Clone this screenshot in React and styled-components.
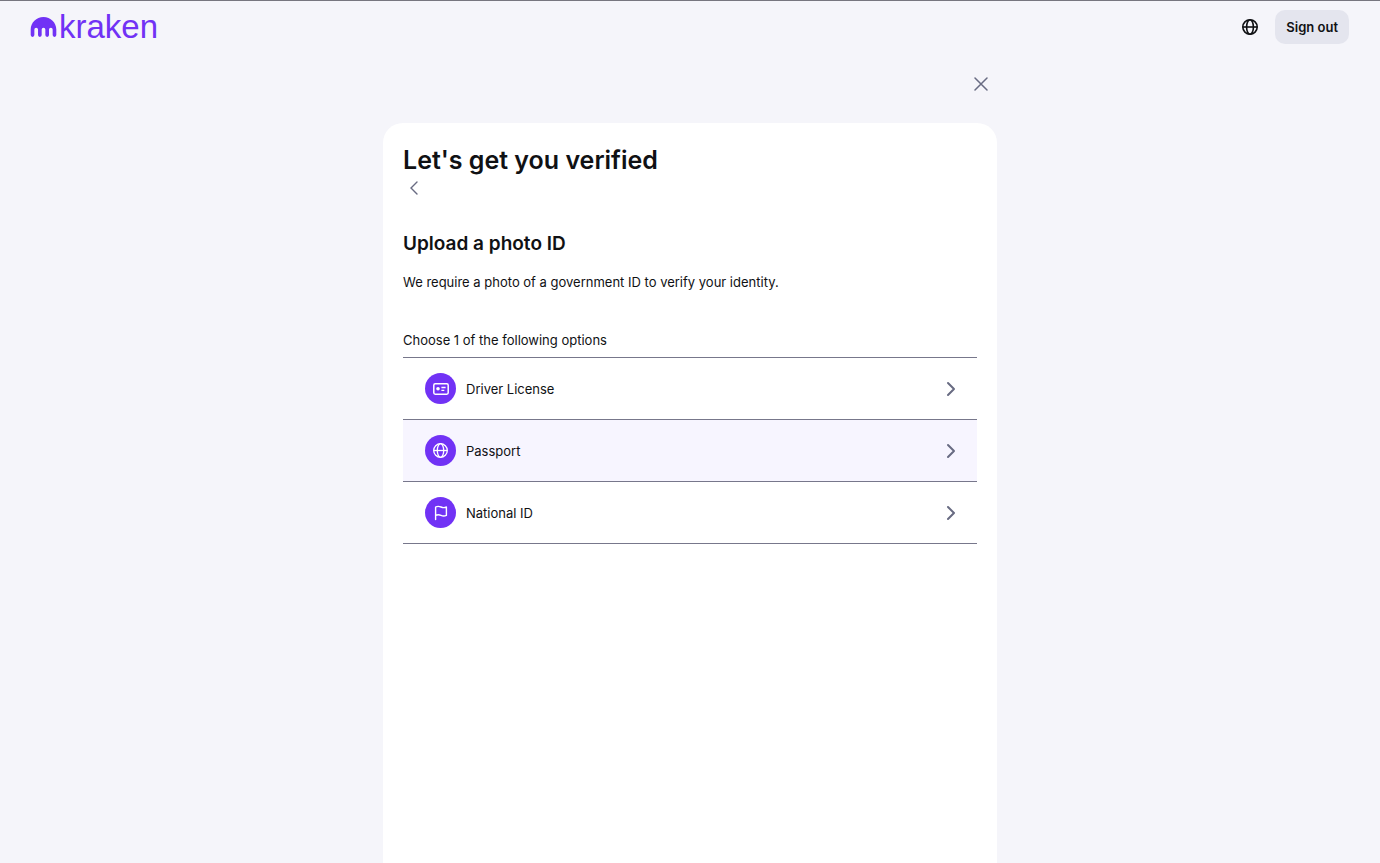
import React from 'react';
import styled, { createGlobalStyle } from 'styled-components';

const GlobalStyle = createGlobalStyle`
  * {
    box-sizing: border-box;
  }

  body {
    margin: 0;
    background: #f5f5fa;
    color: #101114;
    font-family: Inter, 'Liberation Sans', sans-serif;
    font-size: 13px;
    line-height: 20px;
  }

  button {
    margin: 0;
    padding: 0;
    border: 0;
    background: none;
    color: inherit;
    font: inherit;
    cursor: pointer;
  }

  svg {
    display: block;
  }
`;

const Page = styled.div`
  display: flex;
  flex-direction: column;
  min-height: 100vh;
  border-top: 1px solid #77767f;
`;

const Header = styled.header`
  display: flex;
  align-items: center;
  justify-content: space-between;
  height: 52px;
  padding: 0 31px 0 30px;
`;

const Logo = styled.a`
  display: flex;
  align-items: center;
  gap: 2px;
  color: #7132f5;
  text-decoration: none;
`;

const Wordmark = styled.span`
  font-family: 'Liberation Sans', sans-serif;
  font-size: 33px;
  line-height: 28px;
`;

const HeaderActions = styled.div`
  display: flex;
  align-items: center;
  gap: 16px;
`;

const SignOutButton = styled.button`
  height: 34px;
  padding: 0 11px;
  border-radius: 10px;
  background: #e4e5ee;
  font-weight: 600;
`;

const Main = styled.main`
  display: flex;
  flex: 1;
  flex-direction: column;
  width: 100%;
  max-width: 614px;
  margin: 0 auto;
`;

const CloseBar = styled.div`
  display: flex;
  justify-content: flex-end;
  padding: 20px 5px 28px;
`;

const IconButton = styled.button`
  display: flex;
  align-items: center;
  justify-content: center;
  width: 22px;
  height: 22px;
  color: ${({ $dark }) => ($dark ? '#101114' : '#686b82')};
`;

const LanguageButton = styled(IconButton)`
  width: 18px;
`;

const Card = styled.section`
  flex: 1;
  padding: 20px;
  border-radius: 20px 20px 0 0;
  background: #fff;
`;

const Title = styled.h1`
  margin: 0;
  font-size: 25px;
  font-weight: 600;
  line-height: 34px;
`;

const Subtitle = styled.h2`
  margin: 31px 0 14px;
  font-size: 19px;
  font-weight: 600;
  line-height: 28px;
`;

const Description = styled.p`
  margin: 0 0 38px;
`;

const OptionsLabel = styled.p`
  margin: 0;
  padding-bottom: 7px;
  border-bottom: 1px solid #77778b;
`;

const OptionList = styled.ul`
  margin: 0;
  padding: 0;
  list-style: none;
`;

const OptionButton = styled.button`
  display: flex;
  align-items: center;
  gap: 10px;
  width: 100%;
  height: 62px;
  padding: 0 20px 0 22px;
  border-bottom: 1px solid #77778b;
  background: ${({ $highlighted }) => ($highlighted ? '#f7f5ff' : '#fff')};
  text-align: left;
`;

const OptionIcon = styled.span`
  display: flex;
  align-items: center;
  justify-content: center;
  width: 31px;
  height: 31px;
  border-radius: 50%;
  background: #7132f5;
  color: #fff;
`;

const OptionName = styled.span`
  flex: 1;
`;

const KrakenMark = () => (
  <svg width="27" height="20" viewBox="0 0 27 20" fill="currentColor" aria-hidden="true">
    <path d="M13.500 0C6.300 0 .7 5.600 .7 12.600v5.500a1.830 1.830 0 0 0 3.660 0v-5.500a1.830 1.830 0 0 1 3.660 0v5.500a1.830 1.830 0 0 0 3.660 0v-5.500a1.830 1.830 0 0 1 3.660 0v5.500a1.830 1.830 0 0 0 3.660 0v-5.500a1.830 1.830 0 0 1 3.660 0v5.500a1.830 1.830 0 0 0 3.660 0v-5.500C26.300 5.600 20.700 0 13.500 0z" />
  </svg>
);

const GlobeIcon = ({ size, strokeWidth }) => (
  <svg
    width={size}
    height={size}
    viewBox="0 0 18 18"
    fill="none"
    stroke="currentColor"
    strokeWidth={strokeWidth}
    aria-hidden="true"
  >
    <circle cx="9" cy="9" r="7.2" />
    <ellipse cx="9" cy="9" rx="3.4" ry="7.2" />
    <path d="M1.8 9h14.4" />
  </svg>
);

const LicenseIcon = () => (
  <svg width="16" height="12" viewBox="0 0 16 12" fill="none" stroke="currentColor" aria-hidden="true">
    <rect x="0.8" y="0.8" width="14.4" height="10.4" rx="1.4" strokeWidth="1.5" />
    <circle cx="5" cy="5.8" r="1.8" fill="currentColor" stroke="none" />
    <path d="M8.400 4.500h4.200M8.400 7.300h2.900" strokeWidth="1.3" />
  </svg>
);

const FlagIcon = () => (
  <svg
    width="14"
    height="16"
    viewBox="0 0 14 16"
    fill="none"
    stroke="currentColor"
    strokeWidth="1.4"
    strokeLinecap="round"
    strokeLinejoin="round"
    aria-hidden="true"
  >
    <path d="M1.600 14.600V2c1.900-1 3.600-.8 5.400 0s3.500.9 5.400 0v8.400c-1.900.9-3.600.8-5.400 0s-3.500-.9-5.400.1" />
  </svg>
);

const ChevronIcon = () => (
  <svg
    width="14"
    height="16"
    viewBox="0 0 14 16"
    fill="none"
    stroke="currentColor"
    strokeWidth="2"
    strokeLinecap="round"
    strokeLinejoin="round"
    aria-hidden="true"
  >
    <path d="M5 2l6 6-6 6" />
  </svg>
);

const CloseIcon = () => (
  <svg width="14" height="14" viewBox="0 0 14 14" fill="none" stroke="currentColor" strokeWidth="1.5" strokeLinecap="round">
    <path d="M1 1l12 12M13 1L1 13" />
  </svg>
);

const BackIcon = () => (
  <svg width="10" height="14" viewBox="0 0 10 14" fill="none" stroke="currentColor" strokeWidth="1.4" strokeLinecap="round">
    <path d="M8 1L2 7l6 6" />
  </svg>
);

const OptionArrow = styled.span`
  color: #686b82;
`;

const options = [
  { name: 'Driver License', icon: <LicenseIcon /> },
  { name: 'Passport', icon: <GlobeIcon size={17} strokeWidth={1.4} />, highlighted: true },
  { name: 'National ID', icon: <FlagIcon /> },
];

const Option = ({ option }) => (
  <li>
    <OptionButton type="button" $highlighted={option.highlighted}>
      <OptionIcon>{option.icon}</OptionIcon>
      <OptionName>{option.name}</OptionName>
      <OptionArrow>
        <ChevronIcon />
      </OptionArrow>
    </OptionButton>
  </li>
);

const App = () => (
  <>
    <GlobalStyle />
    <Page>
      <Header>
        <Logo href="#home">
          <KrakenMark />
          <Wordmark>kraken</Wordmark>
        </Logo>
        <HeaderActions>
          <LanguageButton type="button" $dark aria-label="Language">
            <GlobeIcon size={18} strokeWidth={1.6} />
          </LanguageButton>
          <SignOutButton type="button">Sign out</SignOutButton>
        </HeaderActions>
      </Header>
      <Main>
        <CloseBar>
          <IconButton type="button" aria-label="Close">
            <CloseIcon />
          </IconButton>
        </CloseBar>
        <Card>
          <Title>Let&apos;s get you verified</Title>
          <IconButton type="button" aria-label="Back">
            <BackIcon />
          </IconButton>
          <Subtitle>Upload a photo ID</Subtitle>
          <Description>We require a photo of a government ID to verify your identity.</Description>
          <OptionsLabel>Choose 1 of the following options</OptionsLabel>
          <OptionList>
            {options.map(option => (
              <Option key={option.name} option={option} />
            ))}
          </OptionList>
        </Card>
      </Main>
    </Page>
  </>
);

export default App;
